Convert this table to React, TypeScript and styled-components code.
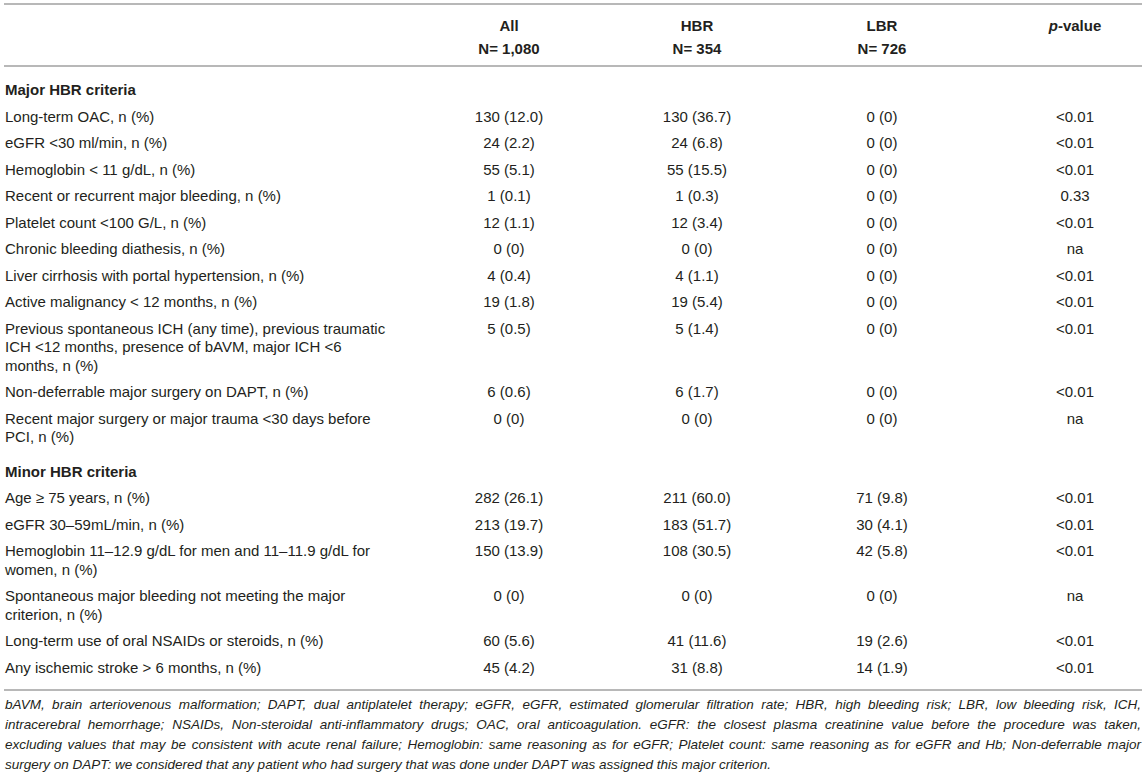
import React from "react";
import styled, { createGlobalStyle } from "styled-components";

const Global = createGlobalStyle`
  html, body { margin: 0; padding: 0; background: #ffffff; }
  * { box-sizing: border-box; }
`;

const Page = styled.div`
  padding: 3px 4px 0 4px;
  font-family: "Liberation Sans", Arial, Helvetica, sans-serif;
  color: #231f20;
  font-size: 15px;
`;

const Table = styled.div`
  border-top: 2px solid #b8b8b8;
`;

const Row = styled.div`
  display: grid;
  grid-template-columns: 410px 190px 186px 184px 1fr;
  align-items: start;
`;

const HeaderRow = styled(Row)`
  font-weight: bold;
  line-height: 23px;
  padding: 8.5px 0 5.5px 0;
  border-bottom: 2px solid #b8b8b8;
`;

const Body = styled.div`
  padding: 2px 0 8px 0;
  border-bottom: 2px solid #b8b8b8;
`;

const DataRow = styled(Row)`
  line-height: 18.5px;
  padding: 4px 0;
`;

const SectionRow = styled(DataRow)`
  padding-top: 12px;
  font-weight: bold;
`;

const Label = styled.div`
  padding-left: 1px;
  white-space: nowrap;
`;

const Cell = styled.div<{ $p?: boolean }>`
  text-align: center;
  white-space: nowrap;
  padding-left: ${(p) => (p.$p ? "34px" : "0")};
`;

const Notes = styled.div`
  padding: 4px 1px 0 1px;
  font-size: 13.5px;
  line-height: 20px;
  font-style: italic;
`;

const NoteLine = styled.div<{ $last?: boolean }>`
  text-align: justify;
  text-align-last: ${(p) => (p.$last ? "left" : "justify")};
`;

type R = { label: React.ReactNode; v: [string, string, string, string] };

const major: R[] = [
  { label: "Long-term OAC, n (%)", v: ["130 (12.0)", "130 (36.7)", "0 (0)", "<0.01"] },
  { label: "eGFR <30 ml/min, n (%)", v: ["24 (2.2)", "24 (6.8)", "0 (0)", "<0.01"] },
  { label: "Hemoglobin < 11 g/dL, n (%)", v: ["55 (5.1)", "55 (15.5)", "0 (0)", "<0.01"] },
  { label: "Recent or recurrent major bleeding, n (%)", v: ["1 (0.1)", "1 (0.3)", "0 (0)", "0.33"] },
  { label: "Platelet count <100 G/L, n (%)", v: ["12 (1.1)", "12 (3.4)", "0 (0)", "<0.01"] },
  { label: "Chronic bleeding diathesis, n (%)", v: ["0 (0)", "0 (0)", "0 (0)", "na"] },
  { label: "Liver cirrhosis with portal hypertension, n (%)", v: ["4 (0.4)", "4 (1.1)", "0 (0)", "<0.01"] },
  { label: "Active malignancy < 12 months, n (%)", v: ["19 (1.8)", "19 (5.4)", "0 (0)", "<0.01"] },
  {
    label: (
      <>
        Previous spontaneous ICH (any time), previous traumatic
        <br />
        ICH &lt;12 months, presence of bAVM, major ICH &lt;6
        <br />
        months, n (%)
      </>
    ),
    v: ["5 (0.5)", "5 (1.4)", "0 (0)", "<0.01"],
  },
  { label: "Non-deferrable major surgery on DAPT, n (%)", v: ["6 (0.6)", "6 (1.7)", "0 (0)", "<0.01"] },
  {
    label: (
      <>
        Recent major surgery or major trauma &lt;30 days before
        <br />
        PCI, n (%)
      </>
    ),
    v: ["0 (0)", "0 (0)", "0 (0)", "na"],
  },
];

const minor: R[] = [
  { label: "Age ≥ 75 years, n (%)", v: ["282 (26.1)", "211 (60.0)", "71 (9.8)", "<0.01"] },
  { label: "eGFR 30–59mL/min, n (%)", v: ["213 (19.7)", "183 (51.7)", "30 (4.1)", "<0.01"] },
  {
    label: (
      <>
        {"Hemoglobin 11–12.9 g/dL for men and 11–11.9 g/dL for"}
        <br />
        women, n (%)
      </>
    ),
    v: ["150 (13.9)", "108 (30.5)", "42 (5.8)", "<0.01"],
  },
  {
    label: (
      <>
        Spontaneous major bleeding not meeting the major
        <br />
        criterion, n (%)
      </>
    ),
    v: ["0 (0)", "0 (0)", "0 (0)", "na"],
  },
  { label: "Long-term use of oral NSAIDs or steroids, n (%)", v: ["60 (5.6)", "41 (11.6)", "19 (2.6)", "<0.01"] },
  { label: "Any ischemic stroke > 6 months, n (%)", v: ["45 (4.2)", "31 (8.8)", "14 (1.9)", "<0.01"] },
];

const Rows = ({ rows }: { rows: R[] }) => (
  <>
    {rows.map((r, i) => (
      <DataRow key={i}>
        <Label>{r.label}</Label>
        <Cell>{r.v[0]}</Cell>
        <Cell>{r.v[1]}</Cell>
        <Cell>{r.v[2]}</Cell>
        <Cell $p>{r.v[3]}</Cell>
      </DataRow>
    ))}
  </>
);

export default function App() {
  return (
    <>
      <Global />
      <Page>
        <Table>
          <HeaderRow>
            <Label />
            <Cell>
              All
              <br />
              N= 1,080
            </Cell>
            <Cell>
              HBR
              <br />
              N= 354
            </Cell>
            <Cell>
              LBR
              <br />
              N= 726
            </Cell>
            <Cell $p>
              <i>p</i>-value
            </Cell>
          </HeaderRow>
          <Body>
            <SectionRow>
              <Label>Major HBR criteria</Label>
            </SectionRow>
            <Rows rows={major} />
            <SectionRow>
              <Label>Minor HBR criteria</Label>
            </SectionRow>
            <Rows rows={minor} />
          </Body>
          <Notes>
            <NoteLine>
              bAVM, brain arteriovenous malformation; DAPT, dual antiplatelet therapy; eGFR, eGFR, estimated glomerular filtration rate; HBR, high bleeding risk; LBR, low bleeding risk, ICH,
            </NoteLine>
            <NoteLine>
              intracerebral hemorrhage; NSAIDs, Non-steroidal anti-inflammatory drugs; OAC, oral anticoagulation. eGFR: the closest plasma creatinine value before the procedure was taken,
            </NoteLine>
            <NoteLine>
              excluding values that may be consistent with acute renal failure; Hemoglobin: same reasoning as for eGFR; Platelet count: same reasoning as for eGFR and Hb; Non-deferrable major
            </NoteLine>
            <NoteLine $last>
              surgery on DAPT: we considered that any patient who had surgery that was done under DAPT was assigned this major criterion.
            </NoteLine>
          </Notes>
        </Table>
      </Page>
    </>
  );
}
